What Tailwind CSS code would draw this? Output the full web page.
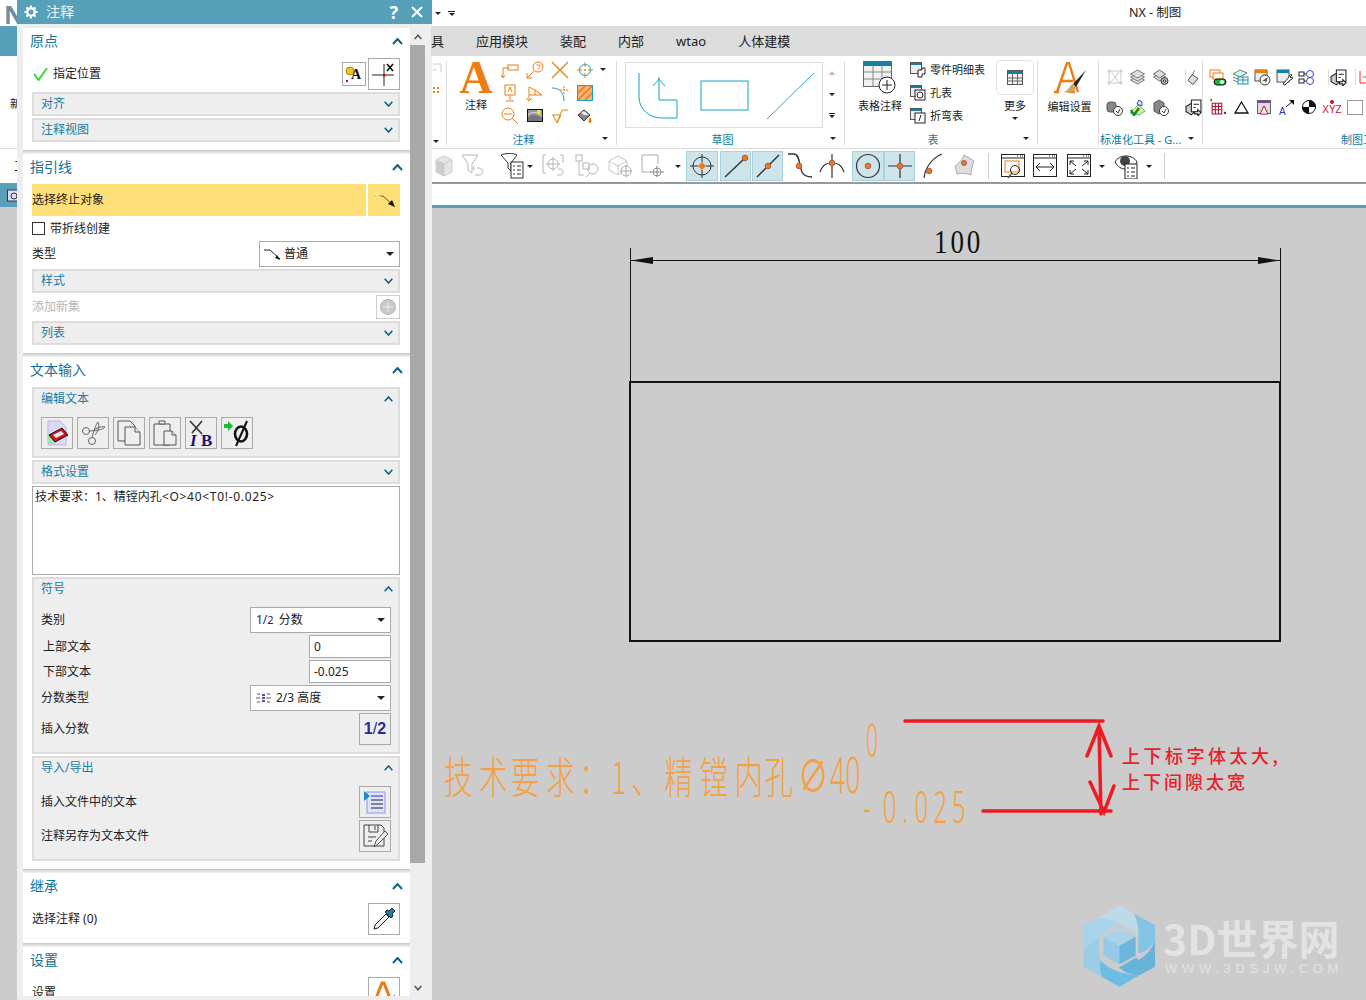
<!DOCTYPE html>
<html lang="zh-CN">
<head>
<meta charset="UTF-8">
<title>NX - 制图</title>
<script src="https://cdn.jsdelivr.net/npm/@tailwindcss/browser@4"></script>
</head>
<body class="bg-white">
<div class="w-[1366px] h-[1000px] flex overflow-hidden text-[12px] leading-none text-[#222] font-['Noto_Sans','Noto_Sans_CJK_SC',sans-serif]">

  <!-- app behind the dialog -->
  <div class="w-[17px] shrink-0 flex flex-col overflow-hidden">
    <div class="h-[26px] overflow-hidden pl-[4px] pt-[2px] text-[25px] leading-[24px] font-bold text-[#6b8ea6]">N</div>
    <div class="h-[30px] bg-[#56a0ba]"></div>
    <div class="h-[93px] border-b border-[#ddd] pl-[10px] pt-[42px] text-[11px] whitespace-nowrap">新</div>
    <div class="h-[34px] pl-[14px] pt-[10px] text-[13px]">工</div>
    <div class="h-[24px] bg-[#56a0ba] pl-[7px] pt-[5px]">
      <svg class="w-[12px] h-[14px]" viewBox="0 0 12 14"><rect x=".5" y="2" width="14" height="11" fill="#dde" stroke="#334"/><circle cx="7" cy="8" r="3" fill="none" stroke="#334"/></svg>
    </div>
    <div class="flex-1 bg-[#cccccc]"></div>
  </div>

  <!-- 注释 dialog -->
  <div class="w-[415px] shrink-0 flex flex-col bg-[#eeeeee]">
    <div class="h-[24px] shrink-0 bg-[#56a0ba] flex items-center text-white pl-[7px] pr-[9px]">
      <svg class="w-[14px] h-[14px]" viewBox="0 0 14 14"><circle cx="7" cy="7" r="3.8" fill="none" stroke="#fff" stroke-width="2.4"/><path d="M7 .5v2.4M7 11v2.5M.5 7h2.4M11 7h2.5M2.4 2.4l1.7 1.7M9.9 9.9l1.700 1.700M2.400 11.600l1.700-1.700M9.900 4.100l1.700-1.700" stroke="#fff" stroke-width="2"/></svg>
      <span class="ml-[8px] text-[14px] text-[#eef6f9]">注释</span>
      <span class="ml-auto text-[18px] font-bold">?</span>
      <svg class="ml-[13px] w-[12px] h-[12px]" viewBox="0 0 12 12"><path d="M1 1l10 10M11 1L1 11" stroke="#fff" stroke-width="2"/></svg>
    </div>
    <div class="flex-1 flex pl-[6px] pt-[4px] pb-[4px] min-h-0">
      <div class="w-[387px] shrink-0 bg-white overflow-hidden">

        <!-- 原点 -->
        <div class="pb-[8px] pl-[9px] pr-[10px]">
          <div class="h-[26px] -ml-[2px] -mr-[3px] flex items-center justify-between text-[14px] text-[#0f7298]">原点
            <svg class="w-[11px] h-[7px]" viewBox="0 0 11 7"><path d="M1 6l4.5-5L10 6" fill="none" stroke="#0a6485" stroke-width="2"/></svg>
          </div>
          <div class="mt-[4px] h-[32px] flex items-center">
            <svg class="w-[15px] h-[14px] ml-[1px]" viewBox="0 0 15 14"><path d="M1 7l4.5 6L14 1" fill="none" stroke="#3bd63b" stroke-width="2"/></svg>
            <span class="ml-[5px]">指定位置</span>
            <div class="ml-auto w-[24px] h-[24px] border border-[#aaa] flex items-center justify-center">
              <svg class="w-[20px] h-[20px]" viewBox="0 0 20 20"><circle cx="6" cy="7" r="4" fill="#f1c21b" stroke="#a58a10"/><rect x="2" y="16" width="2" height="2" fill="#e00"/><text x="7" y="15" font-size="14" font-weight="700" font-family="Liberation Serif" fill="#111">A</text></svg>
            </div>
            <div class="ml-[2px] w-[32px] h-[32px] border border-[#aaa] flex items-center justify-center">
              <svg class="w-[26px] h-[26px]" viewBox="0 0 26 26"><path d="M1 14h22M13 3v22" stroke="#222"/><rect x="12" y="13" width="2.500" height="2.500" fill="#e00"/><path d="M16 3l6 7M22 3l-6 7" stroke="#111" stroke-width="1.600"/></svg>
            </div>
          </div>
          <div class="mt-[2px] h-[24px] bg-[#eeeeee] border-2 border-[#dddddd] flex items-center justify-between pl-[7px] pr-[5px] text-[#1a7da3]">对齐
            <svg class="w-[9px] h-[6px]" viewBox="0 0 9 6"><path d="M.7.7L4.500 5 8.300.7" fill="none" stroke="#0a6485" stroke-width="1.600"/></svg>
          </div>
          <div class="mt-[2px] h-[24px] bg-[#eeeeee] border-2 border-[#dddddd] flex items-center justify-between pl-[7px] pr-[5px] text-[#1a7da3]">注释视图
            <svg class="w-[9px] h-[6px]" viewBox="0 0 9 6"><path d="M.7.7L4.500 5 8.300.7" fill="none" stroke="#0a6485" stroke-width="1.600"/></svg>
          </div>
        </div>
        <div class="h-[4px] bg-gradient-to-b from-[#c8c8c8] to-[#f4f4f4]"></div>

        <!-- 指引线 -->
        <div class="pb-[8px] pl-[9px] pr-[10px]">
          <div class="h-[26px] -ml-[2px] -mr-[3px] flex items-center justify-between text-[14px] text-[#0f7298]">指引线
            <svg class="w-[11px] h-[7px]" viewBox="0 0 11 7"><path d="M1 6l4.500-5L10 6" fill="none" stroke="#0a6485" stroke-width="2"/></svg>
          </div>
          <div class="mt-[4px] h-[32px] flex gap-[2px]">
            <div class="flex-1 bg-[#ffdf77] flex items-center">选择终止对象</div>
            <div class="w-[32px] bg-[#ffdf77] flex items-center justify-center">
              <svg class="w-[24px] h-[16px]" viewBox="0 0 24 16"><path d="M2 4h9l11 10" fill="none" stroke="#555"/><path d="M23 15l-7-3 4-4z" fill="#111"/><path d="M3 1l4 4M7 1L3 6M1 4h8" stroke="#fff59a" stroke-width="1.200"/></svg>
            </div>
          </div>
          <div class="h-[25px] flex items-center">
            <span class="w-[13px] h-[13px] border border-[#333] bg-white"></span>
            <span class="ml-[5px]">带折线创建</span>
          </div>
          <div class="h-[26px] flex items-center justify-between">类型
            <div class="w-[141px] h-[26px] border border-[#aaa] flex items-center pl-[4px] pr-[5px]">
              <svg class="w-[17px] h-[12px]" viewBox="0 0 17 12"><path d="M0 2h6l10 9" fill="none" stroke="#222"/><path d="M16 12l-5-2 2-3z" fill="#111"/></svg>
              <span class="ml-[3px]">普通</span>
              <span class="ml-auto border-x-[4px] border-t-[4px] border-x-transparent border-t-[#222]"></span>
            </div>
          </div>
          <div class="mt-[2px] h-[24px] bg-[#eeeeee] border-2 border-[#dddddd] flex items-center justify-between pl-[7px] pr-[5px] text-[#1a7da3]">样式
            <svg class="w-[9px] h-[6px]" viewBox="0 0 9 6"><path d="M.7.7L4.500 5 8.300.7" fill="none" stroke="#0a6485" stroke-width="1.600"/></svg>
          </div>
          <div class="mt-[2px] h-[24px] flex items-center justify-between text-[#b8b8b8]">添加新集
            <div class="w-[24px] h-[24px] border border-[#ccc] flex items-center justify-center">
              <svg class="w-[16px] h-[16px]" viewBox="0 0 16 16"><circle cx="8" cy="8" r="7.500" fill="#c9c9c9" stroke="#b5b5b5"/><path d="M8 3v10M3 8h10" stroke="#eee"/></svg>
            </div>
          </div>
          <div class="mt-[2px] h-[24px] bg-[#eeeeee] border-2 border-[#dddddd] flex items-center justify-between pl-[7px] pr-[5px] text-[#1a7da3]">列表
            <svg class="w-[9px] h-[6px]" viewBox="0 0 9 6"><path d="M.7.7L4.500 5 8.300.7" fill="none" stroke="#0a6485" stroke-width="1.600"/></svg>
          </div>
        </div>
        <div class="h-[4px] bg-gradient-to-b from-[#c8c8c8] to-[#f4f4f4]"></div>

        <!-- 文本输入 -->
        <div class="pb-[8px] pl-[9px] pr-[10px]">
          <div class="h-[26px] -ml-[2px] -mr-[3px] flex items-center justify-between text-[14px] text-[#0f7298]">文本输入
            <svg class="w-[11px] h-[7px]" viewBox="0 0 11 7"><path d="M1 6l4.500-5L10 6" fill="none" stroke="#0a6485" stroke-width="2"/></svg>
          </div>

          <div class="mt-[4px] h-[71px] bg-[#eeeeee] border-2 border-[#dddddd] pl-[7px] pr-[5px]">
            <div class="h-[20px] flex items-center justify-between text-[#1a7da3]">编辑文本
              <svg class="w-[9px] h-[6px]" viewBox="0 0 9 6"><path d="M.7 5.300L4.500 1l3.800 4.300" fill="none" stroke="#0a6485" stroke-width="1.600"/></svg>
            </div>
            <div class="mt-[8px] flex gap-[4px]">
              <div class="w-[32px] h-[32px] border border-[#aaa] flex items-center justify-center">
                <svg class="w-[24px] h-[26px]" viewBox="0 0 24 26"><path d="M3 1h12l6 6v18H3z" fill="#dcd9f5" stroke="#b9b5e5"/><path d="M3 14l8 10H3z" fill="#9fe0b0"/><path d="M4 15L17 8l6 7-13 7z" fill="#d4121c" stroke="#111"/><path d="M8 15l8-4 3 3-8 4z" fill="#eee"/></svg>
              </div>
              <div class="w-[32px] h-[32px] border border-[#aaa] flex items-center justify-center">
                <svg class="w-[26px] h-[26px]" viewBox="0 0 26 26"><g fill="none" stroke="#666"><circle cx="6" cy="11" r="3.500"/><circle cx="12" cy="21" r="3.500"/><path d="M9 11c5 0 14-1 16-4-4-1-9 1-12 4M12 18c1-5 4-14 6-16 2 4 0 10-3 13"/></g></svg>
              </div>
              <div class="w-[32px] h-[32px] border border-[#aaa] flex items-center justify-center">
                <svg class="w-[26px] h-[26px]" viewBox="0 0 26 26"><g fill="#eee" stroke="#555"><path d="M2 1h12l5 5v15H2z"/><path d="M9 7h10l5 5v13H9z"/><path d="M19 7v5h5"/></g></svg>
              </div>
              <div class="w-[32px] h-[32px] border border-[#aaa] flex items-center justify-center">
                <svg class="w-[26px] h-[28px]" viewBox="0 0 26 28"><g fill="#eee" stroke="#555"><path d="M2 5h16v21H2z"/><path d="M7 5V2h6v3z"/><path d="M12 12h8l4 4v10H12z"/><path d="M20 12v4h4"/></g></svg>
              </div>
              <div class="w-[32px] h-[32px] border border-[#aaa] flex items-center justify-center">
                <svg class="w-[26px] h-[28px]" viewBox="0 0 26 28"><path d="M2 2l12 13M14 2L4 14" stroke="#333" stroke-width="1.600"/><text x="2" y="27" font-size="17" font-weight="700" font-style="italic" font-family="Liberation Serif" fill="#1e1570">I</text><text x="13" y="27" font-size="17" font-weight="700" font-family="Liberation Serif" fill="#1e1570">B</text></svg>
              </div>
              <div class="w-[32px] h-[32px] border border-[#aaa] flex items-center justify-center">
                <svg class="w-[28px] h-[28px]" viewBox="0 0 28 28"><path d="M1 5h4V2l5 5-5 5V9H1z" fill="#1dbb36"/><ellipse cx="18" cy="15" rx="6" ry="7.500" fill="none" stroke="#111" stroke-width="2.600"/><path d="M24 2L13 27" stroke="#111" stroke-width="2"/></svg>
              </div>
            </div>
          </div>

          <div class="mt-[2px] h-[24px] bg-[#eeeeee] border-2 border-[#dddddd] flex items-center justify-between pl-[7px] pr-[5px] text-[#1a7da3]">格式设置
            <svg class="w-[9px] h-[6px]" viewBox="0 0 9 6"><path d="M.7.7L4.500 5 8.300.7" fill="none" stroke="#0a6485" stroke-width="1.600"/></svg>
          </div>
          <div class="mt-[2px] h-[89px] border border-[#aaa] pl-[2px] pt-[4px] whitespace-nowrap">技术要求：1、精镗内孔<span class="tracking-[.7px]">&lt;O&gt;40&lt;T0!-0.025&gt;</span></div>

          <div class="mt-[2px] h-[177px] bg-[#eeeeee] border-2 border-[#dddddd] pl-[7px] pr-[7px]">
            <div class="h-[20px] flex items-center justify-between text-[#1a7da3] -mr-[2px]">符号
              <svg class="w-[9px] h-[6px]" viewBox="0 0 9 6"><path d="M.7 5.300L4.500 1l3.800 4.300" fill="none" stroke="#0a6485" stroke-width="1.600"/></svg>
            </div>
            <div class="mt-[8px] h-[26px] flex items-center justify-between">类别
              <div class="w-[141px] h-[26px] border border-[#aaa] bg-white flex items-center pl-[5px] pr-[5px]">
                <span class="text-[#1a1a80]">1/<span class="text-[11px]">2</span></span>
                <span class="ml-[5px]">分数</span>
                <span class="ml-auto border-x-[4px] border-t-[4px] border-x-transparent border-t-[#222]"></span>
              </div>
            </div>
            <div class="mt-[2px] h-[23px] flex items-center justify-between pl-[2px]">上部文本
              <div class="w-[82px] h-[23px] border border-[#aaa] bg-white flex items-center pl-[4px]">0</div>
            </div>
            <div class="mt-[2px] h-[23px] flex items-center justify-between pl-[2px]">下部文本
              <div class="w-[82px] h-[23px] border border-[#aaa] bg-white flex items-center pl-[4px]">-0.025</div>
            </div>
            <div class="mt-[2px] h-[26px] flex items-center justify-between">分数类型
              <div class="w-[141px] h-[26px] border border-[#aaa] bg-white flex items-center pl-[5px] pr-[5px]">
                <svg class="w-[15px] h-[12px]" viewBox="0 0 15 12"><path d="M0 6h4M10 6h5M1 2h3M11 2h3M1 10h3M11 10h3" stroke="#555"/><path d="M6 3h3M6 6h3M6 9h3" stroke="#1a1a80" stroke-width="1.400"/></svg>
                <span class="ml-[5px]">2/3 高度</span>
                <span class="ml-auto border-x-[4px] border-t-[4px] border-x-transparent border-t-[#222]"></span>
              </div>
            </div>
            <div class="mt-[2px] h-[32px] flex items-center justify-between">插入分数
              <div class="w-[32px] h-[32px] border border-[#aaa] flex items-center justify-center text-[16px] font-bold text-[#2a2a9a] font-['Liberation_Sans']">1<span class="font-normal">/</span>2</div>
            </div>
          </div>

          <div class="mt-[2px] h-[105px] bg-[#eeeeee] border-2 border-[#dddddd] pl-[7px] pr-[7px]">
            <div class="h-[20px] flex items-center justify-between text-[#1a7da3] -mr-[2px]">导入/导出
              <svg class="w-[9px] h-[6px]" viewBox="0 0 9 6"><path d="M.7 5.300L4.500 1l3.800 4.300" fill="none" stroke="#0a6485" stroke-width="1.600"/></svg>
            </div>
            <div class="mt-[8px] h-[32px] flex items-center justify-between">插入文件中的文本
              <div class="w-[32px] h-[32px] border border-[#aaa] flex items-center justify-center">
                <svg class="w-[22px] h-[24px]" viewBox="0 0 22 24"><rect x="3" y="2" width="18" height="21" fill="#dfe3fb" stroke="#8f96e8"/><path d="M7 6h12" stroke="#2a2ae0"/><path d="M7 10h12M7 14h12M7 18h12" stroke="#222"/><path d="M0 1l6 5-6 5z" fill="#1a8fc5"/></svg>
              </div>
            </div>
            <div class="mt-[2px] h-[32px] flex items-center justify-between">注释另存为文本文件
              <div class="w-[32px] h-[32px] border border-[#aaa] flex items-center justify-center">
                <svg class="w-[26px] h-[26px]" viewBox="0 0 26 26"><g fill="none" stroke="#444"><path d="M2 2h17l3 3v18H2z"/><path d="M7 2v7h9V2M13 3v4"/><path d="M6 14h8M6 18h4"/></g><path d="M12 24l2-6L23 8l3 3-10 10z" fill="#eee" stroke="#555"/></svg>
              </div>
            </div>
          </div>
        </div>
        <div class="h-[4px] bg-gradient-to-b from-[#c8c8c8] to-[#f4f4f4]"></div>

        <!-- 继承 -->
        <div class="pb-[8px] pl-[9px] pr-[10px]">
          <div class="h-[26px] -ml-[2px] -mr-[3px] flex items-center justify-between text-[14px] text-[#0f7298]">继承
            <svg class="w-[11px] h-[7px]" viewBox="0 0 11 7"><path d="M1 6l4.500-5L10 6" fill="none" stroke="#0a6485" stroke-width="2"/></svg>
          </div>
          <div class="mt-[4px] h-[32px] flex items-center justify-between">选择注释 (0)
            <div class="w-[32px] h-[32px] border border-[#aaa] flex items-center justify-center">
              <svg class="w-[24px] h-[24px]" viewBox="0 0 24 24"><path d="M2 22l1-4L14 7l3 3L6 21z" fill="#eee" stroke="#222"/><path d="M13 5l6 6 2-2-1-2 3-3-3-3-3 3-2-1z" fill="#2e7ba5" stroke="#123"/></svg>
            </div>
          </div>
        </div>
        <div class="h-[4px] bg-gradient-to-b from-[#c8c8c8] to-[#f4f4f4]"></div>

        <!-- 设置 -->
        <div class="pl-[9px] pr-[10px]">
          <div class="h-[26px] -ml-[2px] -mr-[3px] flex items-center justify-between text-[14px] text-[#0f7298]">设置
            <svg class="w-[11px] h-[7px]" viewBox="0 0 11 7"><path d="M1 6l4.500-5L10 6" fill="none" stroke="#0a6485" stroke-width="2"/></svg>
          </div>
          <div class="mt-[4px] h-[32px] flex items-center justify-between">设置
            <div class="w-[32px] h-[32px] border border-[#aaa] overflow-hidden flex justify-center pt-[3px]">
              <svg class="w-[26px] h-[26px]" viewBox="0 0 26 26"><path d="M2 25L11 2h2l9 23" fill="none" stroke="#ee7d11" stroke-width="3"/><path d="M14 24l10-9" stroke="#444" stroke-width="2.500"/></svg>
            </div>
          </div>
        </div>
      </div>

      <!-- scrollbar -->
      <div class="w-[15px] shrink-0 flex flex-col">
        <div class="h-[17px] flex items-center justify-center">
          <svg class="w-[8px] h-[6px]" viewBox="0 0 8 6"><path d="M.7 5L4 1.200 7.300 5" fill="none" stroke="#555" stroke-width="1.500"/></svg>
        </div>
        <div class="h-[818px] bg-[#a8a8a8]"></div>
        <div class="mt-auto h-[17px] flex items-center justify-center">
          <svg class="w-[8px] h-[6px]" viewBox="0 0 8 6"><path d="M.7 1L4 4.800 7.300 1" fill="none" stroke="#555" stroke-width="1.500"/></svg>
        </div>
      </div>
    </div>
  </div>

  <!-- main window -->
  <div class="flex-1 min-w-0 flex flex-col">
    <div class="h-[26px] shrink-0 flex items-center pl-[3px]">
      <span class="border-x-[3px] border-t-[3px] border-x-transparent border-t-[#222]"></span>
      <span class="ml-[7px] w-[7px] h-[5px] border-t border-[#222] flex justify-center pt-[1px]"><span class="border-x-[3px] border-t-[3px] border-x-transparent border-t-[#222]"></span></span>
      <span class="ml-[674px] text-[12.5px]">NX - 制图</span>
    </div>
    <div class="h-[30px] shrink-0 bg-[#dcdcdc] flex items-center text-[13px] gap-[32px] -ml-px">
      <span class="w-[13px] overflow-hidden">具</span>
      <span>应用模块</span><span>装配</span><span>内部</span><span>wtao</span><span>人体建模</span>
    </div>

    <!-- ribbon -->
    <div class="h-[93px] shrink-0 border-b border-[#ddd] flex pt-[5px] overflow-hidden">
      <!-- cut off group -->
      <div class="w-[15px] h-[84px] border-r border-[#ddd] shrink-0 flex flex-col pl-[1px] relative">
        <svg class="w-[12px] h-[40px]" viewBox="0 0 12 40"><path d="M0 3h8M8 3v8M0 9h4" stroke="#ccc" fill="none"/><path d="M0 27h2M4 27h2M0 31h2M4 31h2" stroke="#ee7d11" stroke-width="2"/></svg>
        <span class="absolute left-[1px] bottom-[2px] border-x-[3px] border-t-[3px] border-x-transparent border-t-[#222]"></span>
      </div>

      <!-- 注释 -->
      <div class="w-[170px] h-[84px] border-r border-[#ddd] shrink-0 flex flex-col relative">
        <div class="flex-1 flex">
          <div class="w-[58px] -mr-[8px] flex flex-col items-center">
            <span class="text-[46px] leading-[34px] h-[36px] font-bold font-['Liberation_Serif'] text-[#ee7d11]">A</span>
            <span class="text-[11px] mt-[2px]">注释</span>
          </div>
          <div class="grid grid-cols-[25px_25px_25px_25px] grid-rows-[23px_23px_23px] -mt-[3px]">
            <div class="flex items-center justify-center"><svg class="w-[18px] h-[18px]" viewBox="0 0 18 18" fill="none" stroke="#ee7d11"><path d="M2 16V7h6"/><rect x="7" y="4" width="10" height="5"/><path d="M0 14l2 3 2-3"/></svg></div>
            <div class="flex items-center justify-center"><svg class="w-[18px] h-[18px]" viewBox="0 0 18 18" fill="none" stroke="#ee7d11"><circle cx="12" cy="6" r="5"/><path d="M8 10l-7 7M1 12v5h5"/><path d="M10 4h4l-2 5" stroke-width=".8"/></svg></div>
            <div class="flex items-center justify-center"><svg class="w-[18px] h-[18px]" viewBox="0 0 18 18"><path d="M1 1l16 16M17 1L1 17" stroke="#ee7d11" stroke-width="1.200"/></svg></div>
            <div class="flex items-center justify-center"><svg class="w-[16px] h-[16px]" viewBox="0 0 16 16" fill="none"><circle cx="8" cy="8" r="5.500" stroke="#13a4c9"/><path d="M8 0v5M8 11v5M0 8h5M11 8h5" stroke="#ee7d11"/><circle cx="8" cy="8" r="1" fill="#ee7d11"/></svg></div>
            <div class="flex items-center justify-center"><svg class="w-[16px] h-[18px]" viewBox="0 0 16 18" fill="none" stroke="#ee7d11"><rect x="3" y="1" width="10" height="10"/><path d="M8 11v5M4 17h8M6 8l2-5 2 5" stroke-width="1"/></svg></div>
            <div class="flex items-center justify-center"><svg class="w-[18px] h-[18px]" viewBox="0 0 18 18" fill="none" stroke="#ee7d11"><path d="M3 16V3l6 3 7 5H3"/><path d="M0 14l3 3 3-3"/><path d="M9 6v5"/></svg></div>
            <div class="flex items-center justify-center"><svg class="w-[18px] h-[18px]" viewBox="0 0 18 18" fill="none"><path d="M1 4c8 0 12 5 12 13" stroke="#13a4c9"/><path d="M13 2v8M9 6h8" stroke="#ee7d11" stroke-dasharray="2 1"/></svg></div>
            <div class="flex items-center justify-center"><svg class="w-[16px] h-[16px]" viewBox="0 0 16 16"><rect x=".5" y=".5" width="15" height="15" fill="#f7b27a" stroke="#13a4c9"/><path d="M1 8l7-7M1 15L15 1M8 15l7-7" stroke="#ee7d11" stroke-width="1.600"/></svg></div>
            <div class="flex items-center justify-center"><svg class="w-[18px] h-[18px]" viewBox="0 0 18 18" fill="none" stroke="#ee7d11"><circle cx="7" cy="7" r="6"/><path d="M3 7h8M11 11l6 6"/></svg></div>
            <div class="flex items-center justify-center"><svg class="w-[16px] h-[13px]" viewBox="0 0 16 13"><rect x=".5" y=".5" width="15" height="12" fill="#999" stroke="#111"/><path d="M1 9c3-4 7-4 14 0v3H1z" fill="#777"/><path d="M1 6c4-4 8-3 14 1" stroke="#ddd" fill="none"/><circle cx="12" cy="3" r="2" fill="#fff200"/></svg></div>
            <div class="flex items-center justify-center"><svg class="w-[17px] h-[16px]" viewBox="0 0 17 16" fill="none" stroke="#ee7d11"><path d="M1 7h9L6 15 2 7M6 15l5-13h6"/></svg></div>
            <div class="flex items-center justify-center"><svg class="w-[16px] h-[16px]" viewBox="0 0 16 16"><path d="M1 7l6-5 6 5-6 6z" fill="#888" stroke="#333"/><path d="M4 5l3-2 5 4H7z" fill="#eee"/><path d="M13 9c2 3 2 6 0 6s-2-3 0-6z" fill="#ee7d11"/></svg></div>
          </div>
          <span class="ml-[3px] mt-[7px] h-0 border-x-[3px] border-t-[3px] border-x-transparent border-t-[#222]"></span>
        </div>
        <div class="h-[17px] pt-[5px] text-center text-[#0f7ba0] text-[11px] pr-[16px] leading-[14px]">注释</div>
        <span class="absolute right-[8px] bottom-[5px] border-x-[3px] border-t-[3px] border-x-transparent border-t-[#222]"></span>
      </div>

      <!-- 草图 -->
      <div class="w-[228px] h-[84px] border-r border-[#ddd] shrink-0 flex flex-col relative">
        <div class="flex-1 flex pl-[8px] pt-px">
          <div class="w-[198px] h-[66px] border border-[#ddd]">
            <svg class="w-full h-full" viewBox="0 0 196 64" fill="none" stroke="#13a4c9"><path d="M13 10v24c0 12 10 21 23 21h15V37H33V14"/><path d="M27 23l6-7 6 7"/><rect x="75" y="18" width="47" height="29"/><path d="M141 56l47-46" stroke-width=".9"/></svg>
          </div>
          <div class="w-[16px] flex flex-col items-center pt-[9px] pl-[1px]">
            <span class="border-x-[3px] border-b-[4px] border-x-transparent border-b-[#bbb]"></span>
            <span class="mt-[18px] border-x-[3px] border-t-[3px] border-x-transparent border-t-[#222]"></span>
            <span class="mt-[17px] w-[6px] border-t border-[#222] pt-[1px]"><span class="block w-0 border-x-[3px] border-t-[3px] border-x-transparent border-t-[#222]"></span></span>
          </div>
        </div>
        <div class="h-[17px] pt-[5px] text-center text-[#0f7ba0] text-[11px] pr-[16px] leading-[14px]">草图</div>
        <span class="absolute right-[8px] bottom-[5px] border-x-[3px] border-t-[3px] border-x-transparent border-t-[#222]"></span>
      </div>

      <!-- 表 -->
      <div class="w-[193px] h-[84px] border-r border-[#ddd] shrink-0 flex flex-col relative">
        <div class="flex-1 flex">
          <div class="w-[65px] flex flex-col items-center pl-[5px]">
            <svg class="w-[34px] h-[34px]" viewBox="0 0 34 34"><rect x=".5" y=".5" width="28" height="25" fill="#f2f2f2" stroke="#666"/><rect x="1" y="1" width="27" height="4" fill="#1a7fa5"/><path d="M1 11h27M1 18h27M10 5v20M19 5v20" stroke="#888"/><circle cx="24" cy="24" r="8" fill="#fff" stroke="#222"/><path d="M24 19v10M19 24h10" stroke="#222"/></svg>
            <span class="text-[11px] mt-[5px] whitespace-nowrap">表格注释</span>
          </div>
          <div class="w-[86px] flex flex-col text-[11px] -mt-[3px]">
            <div class="h-[23px] flex items-center whitespace-nowrap"><svg class="w-[16px] h-[16px]" viewBox="0 0 16 16"><rect x=".5" y=".5" width="11" height="11" fill="#eee" stroke="#555"/><rect x="1" y="1" width="10" height="2" fill="#1a7fa5"/><path d="M8 8h4V6h3v6h-3v3H8z" fill="#fff" stroke="#222"/></svg><span class="ml-[4px]">零件明细表</span></div>
            <div class="h-[23px] flex items-center whitespace-nowrap"><svg class="w-[16px] h-[16px]" viewBox="0 0 16 16"><rect x=".5" y=".5" width="11" height="11" fill="#eee" stroke="#555"/><rect x="1" y="1" width="10" height="2" fill="#1a7fa5"/><rect x="5" y="5" width="10" height="10" fill="#fff" stroke="#222"/><circle cx="10" cy="10" r="3" fill="none" stroke="#222"/></svg><span class="ml-[4px]">孔表</span></div>
            <div class="h-[23px] flex items-center whitespace-nowrap"><svg class="w-[16px] h-[16px]" viewBox="0 0 16 16"><rect x=".5" y=".5" width="11" height="11" fill="#eee" stroke="#555"/><rect x="1" y="1" width="10" height="2" fill="#1a7fa5"/><rect x="5" y="5" width="10" height="10" fill="#fff" stroke="#222"/><path d="M11 7l-2 6" stroke="#222"/></svg><span class="ml-[4px]">折弯表</span></div>
          </div>
          <div class="flex flex-col items-center w-[38px]">
            <div class="w-[38px] h-[35px] -mt-px border border-[#e4e4e4] rounded-[4px] flex items-center justify-center">
              <svg class="w-[16px] h-[15px]" viewBox="0 0 16 15"><rect x=".5" y=".5" width="15" height="14" fill="#f4f4f4" stroke="#555"/><rect x="1" y="1" width="14" height="3" fill="#1a7fa5"/><path d="M1 8h14M1 11h14M5.500 4v10M10.500 4v10" stroke="#666"/></svg>
            </div>
            <span class="text-[11px] mt-[5px]">更多</span>
            <span class="mt-[6px] border-x-[3px] border-t-[3px] border-x-transparent border-t-[#222]"></span>
          </div>
        </div>
        <div class="h-[17px] pt-[5px] text-center text-[#0f7ba0] text-[11px] pr-[16px] leading-[14px]">表</div>
        <span class="absolute right-[8px] bottom-[5px] border-x-[3px] border-t-[3px] border-x-transparent border-t-[#222]"></span>
      </div>

      <!-- 编辑设置 -->
      <div class="w-[61px] h-[84px] border-r border-[#ddd] shrink-0 flex flex-col items-center pt-px pl-[3px]">
        <svg class="w-[34px] h-[34px]" viewBox="0 0 34 34"><path d="M1 30h5M16 30h6M4 30L14 1h2l9 29M8 19h12" fill="none" stroke="#ee7d11" stroke-width="2.400"/><path d="M33 8L20 22l3 3z" fill="#222"/><path d="M20 22c-4 1-3 6-9 8 6 2 11 0 12-5z" fill="#c9a961"/></svg>
        <span class="text-[11px] mt-[5px] whitespace-nowrap">编辑设置</span>
      </div>

      <!-- 标准化工具 -->
      <div class="w-[104px] h-[84px] border-r border-[#ddd] shrink-0 flex flex-col relative">
        <div class="flex-1 pl-[4px]">
          <div class="flex items-center h-[30px] mt-[1px]">
            <div class="w-[23px] flex justify-center"><svg class="w-[16px] h-[16px]" viewBox="0 0 16 16" fill="none" stroke="#ccc"><rect x="2" y="2" width="12" height="12"/><path d="M4 2l8 12M4 13l8-10"/><path d="M1 1h2v2H1zM13 1h2v2h-2zM1 13h2v2H1zM13 13h2v2h-2z" fill="#ddd"/></svg></div>
            <div class="w-[23px] flex justify-center"><svg class="w-[17px] h-[16px]" viewBox="0 0 16 16" fill="#ddd" stroke="#777"><path d="M1 11l7-4 7 4-7 4z"/><path d="M1 8l7-4 7 4-7 4z"/><path d="M1 5l7-4 7 4-7 4z"/></svg></div>
            <div class="w-[23px] flex justify-center"><svg class="w-[17px] h-[16px]" viewBox="0 0 16 16" fill="#ddd" stroke="#666"><path d="M1 8l6-4 6 4-6 4z"/><path d="M1 5l6-4 6 4-6 4z"/><circle cx="12" cy="12" r="3.500" fill="#bbb" stroke="#333"/><circle cx="12" cy="12" r="1.200" fill="#fff" stroke="#333"/></svg></div>
            <div class="w-[14px] h-[16px] flex justify-end"><span class="border-l border-[#ddd]"></span></div>
            <div class="w-[14px] flex justify-center"><svg class="w-[12px] h-[17px] shrink-0" viewBox="0 0 12 16" fill="#ddd" stroke="#555"><path d="M5 5l6 4-5 6-5-4z"/><path d="M6 5c0-3 2-4 2-4" fill="none"/></svg></div>
          </div>
          <div class="flex items-center h-[30px]">
            <div class="w-[23px] flex justify-center"><svg class="w-[17px] h-[17px]" viewBox="0 0 17 17"><rect x="1" y="3" width="9" height="10" rx="3" fill="#888" stroke="#555"/><circle cx="12" cy="12" r="4.500" fill="#fff" stroke="#333"/><path d="M10 12l2 2 2-4" stroke="#333" fill="none"/></svg></div>
            <div class="w-[23px] flex justify-center"><svg class="w-[17px] h-[17px]" viewBox="0 0 17 17"><path d="M1 14l8-8 7 6-6 4z" fill="#ffe97a" stroke="#3fbf9f"/><path d="M8 5l2-4 3 2v4z" fill="#dfe6ff" stroke="#3646c9"/><path d="M2 11l3 5 5-7" stroke="#0a8a1f" fill="none" stroke-width="2.400"/></svg></div>
            <div class="w-[23px] flex justify-center"><svg class="w-[17px] h-[17px]" viewBox="0 0 17 17"><path d="M2 4l5-3 5 3v8l-5 3-5-3z" fill="#888" stroke="#555"/><circle cx="12" cy="12" r="4.500" fill="#fff" stroke="#333"/><path d="M10 12l2 2 2-4" stroke="#333" fill="none"/></svg></div>
            <div class="w-[14px] h-[16px] flex justify-end"><span class="border-l border-[#ddd]"></span></div>
            <div class="w-[14px] flex justify-center"><svg class="w-[17px] h-[17px] shrink-0" viewBox="0 0 16 16" fill="#fff" stroke="#222"><path d="M1 7l5-3 2 1v8l-2 2-5-3z" fill="#ccc"/><path d="M6 1h9v11H6z"/><path d="M8 5h5M8 8h2"/><path d="M9 12h3v-2l3 3-3 3v-2H9z"/></svg></div>
          </div>
        </div>
        <div class="h-[17px] pt-[5px] text-[#0f7ba0] text-[11px] pl-px leading-[14px] whitespace-nowrap">标准化工具 - G...</div>
        <span class="absolute right-[8px] bottom-[5px] border-x-[3px] border-t-[3px] border-x-transparent border-t-[#222]"></span>
      </div>

      <!-- 制图工具 -->
      <div class="flex-1 h-[84px] flex flex-col min-w-0 relative">
        <div class="flex-1 pl-[4px]">
          <div class="flex items-center h-[30px] mt-[1px]">
            <div class="w-[23px] flex justify-center"><svg class="w-[18px] h-[17px]" viewBox="0 0 18 17"><rect x="1" y="1" width="10" height="7" fill="#fff" stroke="#ee7d11"/><rect x="4" y="4" width="10" height="6" fill="#fff" stroke="#ee7d11"/><rect x="5" y="10" width="12" height="6" rx="3" fill="#16b03a" stroke="#111"/><circle cx="13" cy="13" r="2" fill="#fff"/></svg></div>
            <div class="w-[23px] flex justify-center"><svg class="w-[17px] h-[16px]" viewBox="0 0 17 16"><path d="M1 5l7-4 7 3-7 4z" fill="#cfd" stroke="#777"/><path d="M1 8l7 3M1 11l7 3" stroke="#777"/><rect x="6" y="8" width="10" height="7" fill="#fff" stroke="#1593b9"/><path d="M6 11h10M11 8v7" stroke="#1593b9"/></svg></div>
            <div class="w-[23px] flex justify-center"><svg class="w-[17px] h-[17px]" viewBox="0 0 17 17"><rect x="1" y="1" width="12" height="11" fill="#eee" stroke="#555"/><rect x="1" y="1" width="12" height="3" fill="#ee7d11"/><circle cx="11" cy="11" r="5" fill="#fff" stroke="#333"/><path d="M8 12l6-4-2 6-1-2z" fill="#555"/></svg></div>
            <div class="w-[23px] flex justify-center"><svg class="w-[17px] h-[17px]" viewBox="0 0 17 17"><rect x="1" y="1" width="12" height="12" fill="#eee" stroke="#555"/><rect x="1" y="1" width="12" height="3" fill="#1a7fa5"/><path d="M7 15l6-7c0-2 2-3 3-2l-2 2 1 1 2-1c0 2-2 3-3 3l-5 5z" fill="#fff" stroke="#333"/></svg></div>
            <div class="w-[23px] flex justify-center"><svg class="w-[17px] h-[17px]" viewBox="0 0 17 17" fill="none"><rect x="1" y="3" width="5" height="4" stroke="#222"/><rect x="1" y="10" width="5" height="4" stroke="#222"/><path d="M6 5h2M6 12h2" stroke="#222"/><circle cx="12" cy="5" r="3.500" stroke="#3646c9"/><circle cx="12" cy="12" r="3.500" stroke="#3646c9"/></svg></div>
            <div class="w-[12px] h-[16px] flex justify-end"><span class="border-l border-[#ddd]"></span></div>
            <div class="w-[20px] flex justify-center"><svg class="w-[17px] h-[17px] shrink-0" viewBox="0 0 16 16" fill="#fff" stroke="#222"><path d="M1 7l5-3 2 1v8l-2 2-5-3z" fill="#ccc"/><path d="M6 1h9v11H6z"/><path d="M8 5h5M8 8h2"/><path d="M9 12h3v-2l3 3-3 3v-2H9z"/></svg></div>
            <div class="w-[8px] h-[16px] flex justify-end"><span class="border-l border-[#ddd]"></span></div>
            <div class="w-[8px] ml-[2px] overflow-hidden"><svg class="w-[14px] h-[16px]" viewBox="0 0 14 16"><path d="M2 14V2M2 14h10" stroke="#ee3322"/><path d="M5 8h6" stroke="#1593b9"/></svg></div>
          </div>
          <div class="flex items-center h-[30px]">
            <div class="w-[23px] flex justify-center"><svg class="w-[16px] h-[16px]" viewBox="0 0 15 15"><path d="M1 0h1M1 0v2" stroke="#222"/><path d="M2 4h9v10H2zM2 7h9M2 10h9M5 4v10M8 4v10" fill="none" stroke="#b01030"/><rect x="13" y="12" width="2" height="2" fill="#444"/></svg></div>
            <div class="w-[23px] flex justify-center"><svg class="w-[15px] h-[13px]" viewBox="0 0 15 13"><path d="M7.500 1L14 12H1z" fill="none" stroke="#111" stroke-width="1.300"/></svg></div>
            <div class="w-[23px] flex justify-center"><svg class="w-[14px] h-[15px]" viewBox="0 0 14 15"><rect x=".5" y=".5" width="13" height="13" fill="#ddd" stroke="#666"/><rect x="1" y="1" width="12" height="2" fill="#7a3ab0"/><path d="M7 6l4 8H3z" fill="#fff" stroke="#d01020"/></svg></div>
            <div class="w-[23px] flex justify-center"><svg class="w-[15px] h-[15px]" viewBox="0 0 15 15"><text x="0" y="15" font-size="10" font-family="Liberation Sans" fill="#2332b0">A</text><path d="M7 7l7-6" stroke="#111"/><path d="M10 0h5v5z" fill="#111"/></svg></div>
            <div class="w-[23px] flex justify-center"><svg class="w-[14px] h-[14px]" viewBox="0 0 14 14"><circle cx="7" cy="7" r="6.500" fill="#fff" stroke="#111"/><path d="M7 0a7 7 0 0 1 7 7H7zM7 14a7 7 0 0 1-7-7h7z" fill="#111"/></svg></div>
            <div class="w-[23px] flex flex-col items-center text-[10px] leading-[10px] text-[#c8102e]"><span class="w-[4px] h-[4px] rounded-full bg-[#c8102e]"></span><span class="font-['Liberation_Sans'] mt-[1px]">XYZ</span></div>
            <div class="w-[23px] flex justify-center"><span class="w-[16px] h-[15px] border border-[#999]"></span></div>
          </div>
        </div>
        <div class="h-[17px] pt-[5px] text-[#0f7ba0] text-[11px] pl-[138px] leading-[14px] whitespace-nowrap">制图工具</div>
      </div>
    </div>

    <!-- selection bar -->
    <div class="h-[35px] shrink-0 border-b-2 border-[#999] flex items-center pt-[1px]">
      <div class="w-[24px] flex justify-center"><svg class="w-[18px] h-[22px]" viewBox="0 0 18 22" fill="#e6e6e6" stroke="#ccc"><path d="M1 5l8-4 8 4-8 4z"/><path d="M1 5v12l8 4V9z" fill="#ccc"/><path d="M9 9v12l8-4V5z"/></svg></div>
      <div class="w-[34px] flex justify-center"><svg class="w-[25px] h-[24px]" viewBox="0 0 25 24" fill="none" stroke="#b5b5b5"><path d="M1 1h16l-6 9v9l-4-3v-6zM14 21l4 0c5 0 5-7 0-7h-2M14 12l-2 2 2 2"/></svg></div>
      <div class="ml-[7px] w-[30px] flex justify-center"><svg class="w-[24px] h-[26px]" viewBox="0 0 24 26" fill="none" stroke="#333"><path d="M1 2c4-2 13-2 16 0l-6 8v8l-3-3v-5z"/><rect x="11" y="9" width="12" height="16" fill="#fff"/><path d="M13 13h2M17 13h4M13 17h2M17 17h4M13 21h2M17 21h4"/></svg></div>
      <span class="w-[6px] h-0 border-x-[3px] border-t-[3px] border-x-transparent border-t-[#222]"></span>
      <div class="ml-[6px] w-[30px] flex justify-center"><svg class="w-[24px] h-[24px]" viewBox="0 0 24 24" fill="none" stroke="#b5b5b5"><path d="M4 1H1v18h3M18 1h3v8"/><circle cx="11" cy="10" r="5"/><path d="M11 3v14M4 10h14M15 21h3c4 0 4-6 0-6h-2"/></svg></div>
      <div class="ml-px w-[34px] flex justify-center"><svg class="w-[25px] h-[24px]" viewBox="0 0 25 24" fill="none" stroke="#b5b5b5"><rect x="1" y="1" width="6" height="6"/><rect x="8" y="9" width="6" height="6"/><path d="M4 7v14h5M7 12h1"/><circle cx="18" cy="15" r="5"/><path d="M15 19l-4 4"/></svg></div>
      <div class="w-[32px] flex justify-center"><svg class="w-[25px] h-[24px]" viewBox="0 0 25 24" fill="none" stroke="#c5c5c5"><path d="M1 7l9-5 9 5-9 5zM1 7v9l9 5 3-2M19 7v4M10 12v8"/><circle cx="18" cy="17" r="5" stroke="#aaa"/><path d="M18 11v12M12 17h12" stroke="#aaa"/></svg></div>
      <div class="w-[34px] flex justify-center"><svg class="w-[25px] h-[24px]" viewBox="0 0 25 24" fill="none" stroke="#aaa"><path d="M17 10V1H1v17h9"/><circle cx="16" cy="18" r="4" stroke="#999"/><path d="M16 12v11M9 18h14" stroke="#888"/></svg></div>
      <span class="ml-[5px] w-[6px] h-0 border-x-[3px] border-t-[3px] border-x-transparent border-t-[#222]"></span>
      <div class="ml-[5px] w-[32px] h-[30px] bg-[#cce4ea] border border-[#a8d3dc] flex items-center justify-center"><svg class="w-[26px] h-[26px]" viewBox="0 0 26 26" fill="none" stroke="#333"><circle cx="13" cy="13" r="9"/><path d="M13 1v8M13 17v8M1 13h8M17 13h8"/><path d="M13 9l4 4-4 4-4-4z" fill="#ee7d11" stroke="none"/></svg></div>
      <div class="ml-[2px] w-[31px] h-[30px] bg-[#cce4ea] border border-[#a8d3dc] flex items-center justify-center"><svg class="w-[26px] h-[26px]" viewBox="0 0 26 26"><path d="M2 24L22 5" stroke="#333" stroke-width="1.400"/><circle cx="22" cy="5" r="2.800" fill="#ee7d11" stroke="#a55"/></svg></div>
      <div class="ml-px w-[31px] h-[30px] bg-[#cce4ea] border border-[#a8d3dc] flex items-center justify-center"><svg class="w-[26px] h-[26px]" viewBox="0 0 26 26"><path d="M2 24L24 2" stroke="#333" stroke-width="1.400"/><circle cx="13" cy="13" r="2.800" fill="#ee7d11" stroke="#a55"/></svg></div>
      <div class="w-[33px] flex justify-center"><svg class="w-[26px] h-[26px]" viewBox="0 0 26 26"><path d="M1 1h6c6 0 5 12 8 18 2 4 6 5 10 5" fill="none" stroke="#333" stroke-width="1.400"/><circle cx="12" cy="13" r="2.800" fill="#ee7d11" stroke="#a55"/></svg></div>
      <div class="w-[32px] flex justify-center"><svg class="w-[26px] h-[26px]" viewBox="0 0 26 26"><path d="M13 1v24M1 19c3-8 7-9 12-9s9 1 12 9" fill="none" stroke="#333" stroke-width="1.200"/><circle cx="13" cy="10" r="2.800" fill="#ee7d11" stroke="#a55"/></svg></div>
      <div class="ml-[4px] w-[32px] h-[30px] bg-[#cce4ea] border border-[#a8d3dc] flex items-center justify-center"><svg class="w-[26px] h-[26px]" viewBox="0 0 26 26"><circle cx="13" cy="13" r="11.500" fill="none" stroke="#333" stroke-width="1.200"/><circle cx="13" cy="13" r="2.800" fill="#ee7d11" stroke="#a55"/></svg></div>
      <div class="w-[31px] h-[30px] bg-[#cce4ea] border border-[#a8d3dc] flex items-center justify-center"><svg class="w-[26px] h-[26px]" viewBox="0 0 26 26"><path d="M13 1v24M1 13h24" stroke="#333" stroke-width="1.200"/><circle cx="13" cy="13" r="2.800" fill="#ee7d11" stroke="#a55"/></svg></div>
      <div class="ml-[2px] w-[32px] flex justify-center"><svg class="w-[22px] h-[26px]" viewBox="0 0 22 26"><path d="M2 25c1-10 8-20 18-24" fill="none" stroke="#333" stroke-width="1.200"/><circle cx="7" cy="18" r="2.800" fill="#ee7d11" stroke="#a55"/></svg></div>
      <div class="w-[30px] flex justify-center"><svg class="w-[24px] h-[26px]" viewBox="0 0 24 26"><path d="M3 13c4-3 8-7 9-11l10 6c-2 5-3 9-3 14C14 20 9 20 5 21z" fill="#ddd" stroke="#aaa"/><circle cx="12" cy="10" r="2.500" fill="#ee7d11" stroke="#a55"/></svg></div>
      <span class="ml-[9px] h-[26px] border-l border-[#ccc]"></span>
      <div class="ml-[12px] w-[24px] flex justify-center"><svg class="w-[24px] h-[25px]" viewBox="0 0 24 25" fill="none"><rect x=".5" y=".5" width="23" height="22" stroke="#222"/><path d="M1 4h22" stroke="#222"/><path d="M16 2h1M19 2h1M21 2h1" stroke="#222"/><rect x="4" y="7" width="14" height="11" stroke="#ee7d11" fill="#fff"/><circle cx="14" cy="16" r="4.500" stroke="#222"/><path d="M11 19l-4 5" stroke="#555" stroke-width="1.500"/></svg></div>
      <div class="ml-[8px] w-[24px] flex justify-center"><svg class="w-[24px] h-[24px]" viewBox="0 0 24 24" fill="none" stroke="#222"><rect x=".5" y=".5" width="23" height="22"/><path d="M1 4h22M16 2h1M19 2h1M21 2h1M3 13h18M7 9l-4 4 4 4M17 9l4 4-4 4"/></svg></div>
      <div class="ml-[10px] w-[24px] flex justify-center"><svg class="w-[24px] h-[24px]" viewBox="0 0 24 24" fill="none" stroke="#222"><rect x=".5" y=".5" width="23" height="22"/><path d="M1 4h22M16 2h1M19 2h1M21 2h1M3 7l6 5M3 7h4M3 7v4M21 7l-6 5M21 7h-4M21 7v4M3 20l6-5M3 20h4M3 20v-4M21 20l-6-5M21 20h-4M21 20v-4"/></svg></div>
      <span class="ml-[8px] w-[6px] h-0 border-x-[3px] border-t-[3px] border-x-transparent border-t-[#222]"></span>
      <div class="ml-[8px] w-[26px] flex justify-center"><svg class="w-[25px] h-[25px]" viewBox="0 0 25 25"><path d="M1 8c4-8 18-8 22 0-3 5-6 7-11 7S4 13 1 8z" fill="#fff" stroke="#222"/><circle cx="11" cy="7" r="5" fill="#444"/><rect x="11" y="10" width="12" height="15" fill="#fff" stroke="#222"/><path d="M13 14h2M17 14h4M13 18h2M17 18h4M13 22h2M17 22h4" stroke="#222"/></svg></div>
      <span class="ml-[7px] w-[6px] h-0 border-x-[3px] border-t-[3px] border-x-transparent border-t-[#222]"></span>
      <span class="ml-[12px] h-[26px] border-l border-[#ccc]"></span>
    </div>

    <div class="h-[21px] shrink-0 bg-white"></div>
    <div class="h-[3px] shrink-0 bg-[#56a0ba]"></div>

    <!-- drawing sheet: free canvas with origin at (432,208) -->
    <div class="flex-1 bg-[#cccccc]">
      <svg class="block" width="934" height="792" viewBox="0 0 934 792" fill="none">
        <!-- dimension and part -->
        <path d="M198.500 40v134M848.500 40v134M199 52.500h649" stroke="#111"/>
        <path d="M199 52.500l22-3.500v7zM848 52.500l-22-3.500v7z" fill="#111"/>
        <rect x="198" y="174" width="650" height="259" stroke="#111" stroke-width="2"/>
        <text transform="translate(502,45) scale(.82,1)" font-size="33" font-family="Liberation Serif" fill="#111" x="0 20 40">100</text>

        <!-- note text -->
        <g fill="#f5a045" font-family="Noto Sans CJK SC" font-weight="300">
          <text transform="translate(12,586) scale(.65,1)" font-size="44" x="0 54 103 157 208 257 288 339 393 447 493">技术要求：1、精镗内孔</text>
          <text transform="translate(366,585) scale(.85,1.250)" font-size="36" font-family="Noto Sans">∅</text>
          <text transform="translate(398,585) scale(.7,1.300)" font-size="38" font-family="Noto Sans">40</text>
          <text transform="translate(434,549) scale(.55,1.200)" font-size="38" font-family="Noto Sans">0</text>
          <text transform="translate(431,615) scale(.66,1.200)" font-size="36" font-family="Noto Sans" x="0 30 60 78 107 135">-0.025</text>
        </g>

        <!-- red markup -->
        <g stroke="#ed1c24" stroke-width="3.500" stroke-linecap="round">
          <path d="M473 513h198M551 603h128"/>
          <path d="M667 520l2 86M655 548l12-30 12 30M658 574l14 30 10-26"/>
        </g>
        <g fill="#e8202a" font-size="18" font-family="Noto Sans CJK SC" font-weight="500">
          <text x="690" y="555" letter-spacing="3.500">上下标字体太大,</text>
          <text x="690" y="581" letter-spacing="3">上下间隙太宽</text>
        </g>

        <!-- watermark: coordinates are 3x, as read from the crop -->
        <g transform="translate(638,687) scale(.3333)">
          <path d="M85 68L148 30l42 25c14 28 15 55 15 75-10-16-28-32-55-42-20-8-40-16-65-20z" fill="#bcdbea"/>
          <path d="M190 55l65 35v45c-14 26-30 36-50 40l-8-7v-38l8-5c2-25-3-50-15-70z" fill="#83c3e3"/>
          <path d="M255 135v80l-45 25c-24 2-48-8-65-25l52-30 8 10c20-10 40-30 50-60z" fill="#67b3d9"/>
          <path d="M210 240l-62 35-53-30c-6-16-6-32-3-50 20 24 50 42 118 45z" fill="#6cbde5"/>
          <path d="M95 245l-55-30v-45c10-18 30-35 50-45 -6 26-5 50 2 70-4 18-3 34 3 50z" fill="#9ccde6"/>
          <path d="M40 170V90l45-22c24 2 46 8 60 17l-55 40c-20 10-40 27-50 45z" fill="#a9d3ea"/>
          <path d="M148 85l57 33v66l-57 33-57-33v-66z" fill="#cccccc"/>
          <path d="M148 98l49 27-49 27-48-27z" fill="#abd3e8"/>
          <path d="M100 125l48 27v56l-48-26z" fill="#97c8e5"/>
          <path d="M197 125l-49 27v56l49-26z" fill="#6eb5db"/>
        </g>
        <text x="731" y="747" font-size="41" font-weight="700" font-family="Noto Sans CJK SC" fill="#e3e3e3">3D世界网</text>
        <text x="733" y="765" font-size="13" font-family="Liberation Sans" letter-spacing="4.700" fill="#e3e3e3">WWW.3DSJW.COM</text>
      </svg>
    </div>
  </div>
</div>
</body>
</html>
